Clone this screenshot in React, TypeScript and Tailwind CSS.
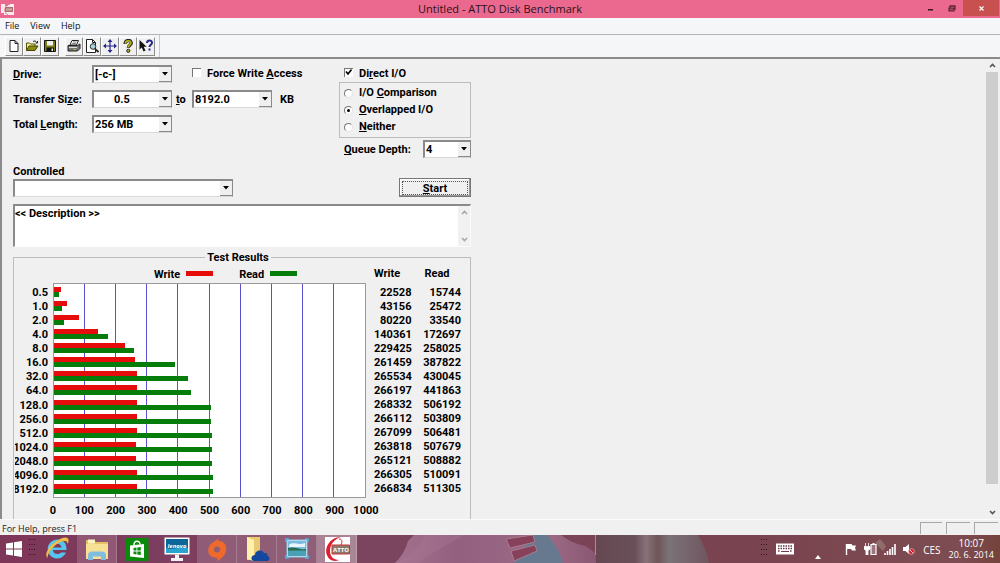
import type { ReactNode } from 'react';
import clsx from 'clsx';

interface Result {
  size: string;
  write: number;
  read: number;
}

const RESULTS: Result[] = [
  { size: '0.5', write: 22528, read: 15744 },
  { size: '1.0', write: 43156, read: 25472 },
  { size: '2.0', write: 80220, read: 33540 },
  { size: '4.0', write: 140361, read: 172697 },
  { size: '8.0', write: 229425, read: 258025 },
  { size: '16.0', write: 261459, read: 387822 },
  { size: '32.0', write: 265534, read: 430045 },
  { size: '64.0', write: 266197, read: 441863 },
  { size: '128.0', write: 268332, read: 506192 },
  { size: '256.0', write: 266112, read: 503809 },
  { size: '512.0', write: 267099, read: 506481 },
  { size: '1024.0', write: 263818, read: 507679 },
  { size: '2048.0', write: 265121, read: 508882 },
  { size: '4096.0', write: 266305, read: 510091 },
  { size: '8192.0', write: 266834, read: 511305 },
];

// Full width of the chart, in KB/s
const SCALE = 1000000;
const TICKS = [0, 100, 200, 300, 400, 500, 600, 700, 800, 900, 1000];

export default function App() {
  return (
    <div className="flex h-screen flex-col overflow-hidden bg-[#f0f0f0] font-['Roboto',sans-serif] text-[11px] font-bold text-black">
      <TitleBar />
      <nav className="flex h-4 shrink-0 items-center gap-[11px] bg-[#f5f6f8] px-[5px] font-['Open_Sans',sans-serif] text-[9px] font-normal text-[#111]">
        <button>File</button>
        <button>View</button>
        <button>Help</button>
      </nav>
      <Toolbar />
      <main className="flex min-h-0 flex-1 overflow-hidden border-t-2 border-l-2 border-[#8b8b8b] pr-[2px]">
        <div className="min-w-0 flex-1 overflow-hidden pt-[6px] pl-[11px]">
          <div className="w-full max-w-[458px]">
            <Settings />
            <Description />
            <TestResults />
          </div>
        </div>
        <PageScrollbar />
      </main>
      <footer className="flex h-[16px] shrink-0 items-center justify-between border-t border-[#fbfbfb] font-['Open_Sans',sans-serif] text-[9px] font-normal text-[#222]">
        <span className="pt-[2px] pl-[2px] leading-[13px]">For Help, press F1</span>
        <div className="flex gap-1 pr-[2px]">
          <span className="h-3 w-[22px] border-t border-l border-[#a8a8a8]" />
          <span className="h-3 w-[24px] border-t border-l border-[#a8a8a8]" />
          <span className="h-3 w-[24px] border-t border-l border-[#a8a8a8]" />
        </div>
      </footer>
      <Taskbar />
    </div>
  );
}

function TitleBar() {
  return (
    <header className="grid h-[18px] shrink-0 grid-cols-[1fr_auto_1fr] items-center bg-[#eb698e] font-['Open_Sans',sans-serif] text-[11px] font-normal text-[#2b1219]">
      <svg className="ml-[1px] h-[13px] w-[13px]" viewBox="0 0 13 13" aria-hidden="true">
        <path d="M0 1h4v2h3V1h6v11H3v-2H0z" fill="#fbe9ee" />
        <path d="M9 1C3 2 2 10 7 12" fill="none" stroke="#e0788f" />
        <path d="M4 4h8v5H4z" fill="#a9706e" />
        <path d="M5 6h6M5 7h6" stroke="#dcc5b8" strokeWidth=".8" />
      </svg>
      <h1 className="leading-[18px]">Untitled - ATTO Disk Benchmark</h1>
      <div className="flex h-full items-start justify-end pr-[1px]">
        <button aria-label="Minimize" className="flex h-4 w-5 items-center justify-center">
          <svg width="6" height="6"><path d="M0 4h5v1.5H0z" fill="#3b1520" /></svg>
        </button>
        <button aria-label="Restore" className="flex h-4 w-[22px] items-center justify-center">
          <svg width="8" height="7" viewBox="0 0 8 7">
            <path d="M2 1h5v3H2z" fill="none" stroke="#5b2435" strokeWidth="1.3" />
            <path d="M1 3h5v3H1z" fill="#a84863" stroke="#5b2435" strokeWidth="1.2" />
          </svg>
        </button>
        <button aria-label="Close" className="flex h-4 w-9 items-center justify-center bg-[#c8504f]">
          <svg width="5" height="5"><path d="M.5.5l4 4M4.500.5l-4 4" stroke="#fff" strokeWidth="1.100" /></svg>
        </button>
      </div>
    </header>
  );
}

function ToolButton({ label, children }: { label: string; children: ReactNode }) {
  return (
    <button
      aria-label={label}
      className="flex h-[19px] w-[18px] items-center justify-center border border-t-white border-r-[#8c8c8c] border-b-[#8c8c8c] border-l-white bg-[#f0f0f0]"
    >
      <svg width="14" height="14" viewBox="0 0 14 14" aria-hidden="true">
        {children}
      </svg>
    </button>
  );
}

function Toolbar() {
  return (
    <div className="flex h-[23px] shrink-0 border-t border-[#b4b4b6] bg-[#f5f6f8]">
      <div className="flex items-center gap-[6px] border-r border-[#c9c9cb] pr-1 pl-[5px]">
        <div className="flex">
          <ToolButton label="New">
            <path d="M3 1.500h5l3 3v8H3z" fill="#fff" stroke="#222" />
            <path d="M8 1.500v3h3" fill="none" stroke="#222" />
          </ToolButton>
          <ToolButton label="Open">
            <path d="M1.500 11V4h3l1 1H10v2" fill="#f4ef8c" stroke="#55550a" />
            <path d="M1.500 11.500l2.500-4.500h9l-3 4.500z" fill="#8b8b10" stroke="#44440a" />
            <path d="M8 2.500c1.500-1 3-.5 3.500 1M12.500 2v2h-2" fill="none" stroke="#222" />
          </ToolButton>
          <ToolButton label="Save">
            <path d="M1.500 1.500h11v11h-11z" fill="#7c7c12" stroke="#111" />
            <path d="M4 2h6v4.500H4z" fill="#f0f0f0" />
            <path d="M3.500 8.500h7.500V12H3.500z" fill="#111" />
            <path d="M8.500 9.500H10V12H8.500z" fill="#eee" />
          </ToolButton>
        </div>
        <div className="flex">
          <ToolButton label="Print">
            <path d="M5 1.500h6.500l-2 4.500H3z" fill="#fff" stroke="#222" />
            <path d="M6 3h3.500M5.200 4.500h3.500" stroke="#444" strokeWidth=".7" />
            <path d="M1 6.500h9.500L13 5v4.500L10.500 12H1z" fill="#777" stroke="#222" />
            <path d="M2 8.500h8" stroke="#ddd" />
            <path d="M6.500 10.500h2" stroke="#c9c22c" />
          </ToolButton>
          <ToolButton label="Print Preview">
            <path d="M1.500.5h6l3 3v10h-9z" fill="#fff" stroke="#222" />
            <path d="M7.500.5v3h3" fill="none" stroke="#222" />
            <circle cx="8" cy="7.500" r="2.800" fill="#a8d4dd" stroke="#333" />
            <path d="M10 9.800l3.500 3.200" stroke="#222" strokeWidth="1.800" />
          </ToolButton>
          <ToolButton label="Move">
            <path d="M7 2v10M2 7h10" stroke="#26268c" strokeWidth="1.200" />
            <path d="M7 0l2.500 3h-5zM7 14l2.500-3h-5zM0 7l3-2.500v5zM14 7l-3-2.500v5z" fill="#26268c" />
          </ToolButton>
          <ToolButton label="Help">
            <path d="M4.200 5c0-4.500 6-4.500 6-1 0 2-2.800 2-2.800 4.800" fill="none" stroke="#222" strokeWidth="3.400" />
            <path d="M4.500 4.700c0-3.700 5.300-3.700 5.300-.7 0 1.800-2.500 2-2.500 4.300" fill="none" stroke="#b5b01c" strokeWidth="1.900" />
            <circle cx="7.300" cy="11.800" r="1.600" fill="#b5b01c" stroke="#222" />
          </ToolButton>
          <ToolButton label="Context Help">
            <path d="M.5 1v9.500l2.300-2 1.700 4 2-.9-1.800-3.800h3z" fill="#111" />
            <path d="M8 4c0-3.200 5-3.200 5-.3 0 2-2.500 2-2.500 4.300M10.500 9.500v2" fill="none" stroke="#26268c" strokeWidth="2" />
          </ToolButton>
        </div>
      </div>
    </div>
  );
}

interface ComboBoxProps {
  id: string;
  value: string;
  label?: string;
  className: string;
  indent?: boolean;
}

function ComboBox({ id, value, label, className, indent = false }: ComboBoxProps) {
  return (
    <div
      className={clsx(
        'relative h-[18px] border-t-2 border-r border-b border-l-2 border-t-[#8a8a8a] border-r-[#8a8a8a] border-b-[#d8d8d8] border-l-[#8a8a8a] bg-white',
        className,
      )}
    >
      <select
        id={id}
        aria-label={label}
        className={clsx('block h-full w-full appearance-none bg-transparent pr-3 leading-[15px] outline-none', indent ? 'pl-5' : 'pl-[1px]')}
      >
        <option>{value}</option>
      </select>
      <span className="pointer-events-none absolute inset-y-0 right-0 flex w-3 items-center justify-center border-b border-[#8a8a8a] bg-[#f0f0f0]">
        <svg width="6" height="4"><path d="M0 0h6L3 3.500z" fill="#000" /></svg>
      </span>
    </div>
  );
}

const CHECKBOX =
  "relative block h-[9px] w-[9px] shrink-0 appearance-none border-t border-l border-[#777] bg-white";
const RADIO =
  'grid h-[9px] w-[9px] shrink-0 appearance-none place-items-center rounded-full border border-t-[#777] border-r-[#e4e4e4] border-b-[#e4e4e4] border-l-[#777] bg-white checked:before:h-[3px] checked:before:w-[3px] checked:before:rounded-full checked:before:bg-black';
const CAPTION = 'pt-[2px] leading-[16px]';

function Settings() {
  return (
    <section aria-label="Settings">
      <div className="flex justify-between">
        <div className="flex flex-col gap-[7px]">
          <div className="flex h-[18px]">
            <label htmlFor="drive" className={clsx('w-[79px]', CAPTION)}><u>D</u>rive:</label>
            <ComboBox id="drive" value="[-c-]" className="w-20" />
            <label className="ml-5 flex h-[15px] items-center gap-[6px]">
              <input type="checkbox" className={CHECKBOX} />
              <span className={CAPTION}>Force Write <u>A</u>ccess</span>
            </label>
          </div>
          <div className="flex items-center">
            <label htmlFor="size-from" className={clsx('w-[79px]', CAPTION)}>Transfer Si<u>z</u>e:</label>
            <ComboBox id="size-from" value="0.5" className="w-20" indent />
            <label htmlFor="size-to" className={clsx('w-5 pl-1', CAPTION)}><u>t</u>o</label>
            <ComboBox id="size-to" value="8192.0" className="w-20" />
            <span className={clsx('pl-2', CAPTION)}>KB</span>
          </div>
          <div className="flex items-center">
            <label htmlFor="length" className={clsx('w-[79px]', CAPTION)}>Total <u>L</u>ength:</label>
            <ComboBox id="length" value="256 MB" className="w-20" />
          </div>
        </div>

        <div className="flex w-[132px] flex-col gap-[2px]">
          <label className="flex h-[15px] items-center gap-[6px] pl-[5px]">
            <span className="relative">
              <input type="checkbox" defaultChecked className={CHECKBOX} />
              <svg className="pointer-events-none absolute top-[1px] left-[1px]" width="7" height="7">
                <path d="M1 2.500l2 2.500 3.500-4.500" fill="none" stroke="#000" strokeWidth="1.600" />
              </svg>
            </span>
            <span className={CAPTION}>Di<u>r</u>ect I/O</span>
          </label>
          <fieldset aria-label="I/O mode" className="h-14 border border-[#bcbcbc] pt-[2px] pl-1">
            <label className="flex h-[17px] items-center gap-[6px]">
              <input type="radio" name="io" className={RADIO} />
              <span>I/O <u>C</u>omparison</span>
            </label>
            <label className="flex h-[17px] items-center gap-[6px]">
              <input type="radio" name="io" defaultChecked className={RADIO} />
              <span><u>O</u>verlapped I/O</span>
            </label>
            <label className="flex h-[17px] items-center gap-[6px]">
              <input type="radio" name="io" className={RADIO} />
              <span><u>N</u>either</span>
            </label>
          </fieldset>
          <div className="flex items-center justify-between pl-[5px]">
            <label htmlFor="queue" className={CAPTION}><u>Q</u>ueue Depth:</label>
            <ComboBox id="queue" value="4" className="w-12" />
          </div>
        </div>
      </div>

      <div className="mt-[6px] flex items-end justify-between">
        <div>
          <label htmlFor="controlled" className="block h-[15px] leading-[15px]">Controlled</label>
          <ComboBox id="controlled" value="" className="w-[220px]" />
        </div>
        <button className="h-[19px] w-[72px] border border-[#777] bg-[#f0f0f0] shadow-[inset_-1px_-1px_0_#999,inset_1px_1px_0_#fff]">
          <span className="mx-[2px] block h-[14px] border border-dotted border-[#555] leading-[14px]"><u>S</u>tart</span>
        </button>
      </div>
    </section>
  );
}

function Description() {
  return (
    <div className="mt-[7px] flex h-[43px] border-t-2 border-r border-b border-l-2 border-t-[#8a8a8a] border-r-[#fbfbfb] border-b-[#fbfbfb] border-l-[#8a8a8a] bg-white">
      <textarea
        aria-label="Description"
        defaultValue="<< Description >>"
        className="block h-full flex-1 resize-none overflow-hidden bg-transparent leading-[16px] outline-none"
      />
      <div className="flex w-3 flex-col items-center justify-between bg-[#f1f1f1] py-1">
        <Chevron up color="#a8a8a8" />
        <Chevron color="#a8a8a8" />
      </div>
    </div>
  );
}

function Chevron({ up = false, color }: { up?: boolean; color: string }) {
  return (
    <svg width="7" height="5" aria-hidden="true">
      <path d={up ? 'M1 4l2.500-2.500L6 4' : 'M1 1l2.500 2.500L6 1'} fill="none" stroke={color} strokeWidth="1.600" />
    </svg>
  );
}

function TestResults() {
  return (
    <fieldset className="mt-[3px] h-[280px] border border-[#bcbcbc] pr-[9px] pl-[1px]">
      <legend className="mx-auto h-[14px] px-[2px] leading-[16px]">Test Results</legend>
      <div className="flex gap-2">
        <div className="grid min-w-0 flex-1 grid-cols-[33px_1fr] grid-rows-[19px_215px_24px] gap-x-[5px]">
          <div className="col-start-2 flex items-center gap-[6px] pl-[101px]">
            <span className={CAPTION}>Write</span>
            <span className="h-[5px] w-[27px] bg-[#e60c0c]" />
            <span className={clsx('ml-5', CAPTION)}>Read</span>
            <span className="h-[5px] w-[27px] bg-[#067c0a]" />
          </div>

          <div className="col-start-1 flex flex-col overflow-hidden pt-[3px] pb-[1px]">
            {RESULTS.map((r) => (
              <span key={r.size} className="flex min-h-0 flex-1 items-center justify-end leading-[14px]">{r.size}</span>
            ))}
          </div>
          <div className="relative border border-[#999] bg-white pt-[1px] pb-[1px]">
            <div className="absolute inset-0 grid grid-cols-10">
              {TICKS.slice(1).map((t) => (
                <span key={t} className="border-r border-[#5a52cc] last:border-r-0" />
              ))}
            </div>
            <div className="relative flex h-full flex-col">
              {RESULTS.map((r) => (
                <div key={r.size} className="flex flex-1 flex-col justify-center">
                  <div className="h-[5px] bg-[#e60c0c]" style={{ width: `${(r.write / SCALE) * 100}%` }} />
                  <div className="h-[5px] bg-[#067c0a]" style={{ width: `${(r.read / SCALE) * 100}%` }} />
                </div>
              ))}
            </div>
          </div>

          <div className="col-start-2 flex justify-between leading-[26px]">
            {TICKS.map((t) => (
              <span key={t} className="flex w-0 justify-center">{t}</span>
            ))}
          </div>
        </div>

        <table className="h-fit w-[87px] table-fixed border-collapse">
          <thead>
            <tr className="h-[22px] text-left align-top leading-[20px]">
              <th>Write</th>
              <th className="pl-[7px]">Read</th>
            </tr>
          </thead>
          <tbody>
            {RESULTS.map((r) => (
              <tr key={r.size} className="text-right leading-[14px]">
                <td className="pr-[6px]">{r.write}</td>
                <td>{r.read}</td>
              </tr>
            ))}
          </tbody>
        </table>
      </div>
    </fieldset>
  );
}

function PageScrollbar() {
  return (
    <div className="flex w-3 flex-col items-center bg-[#f0f0f0]">
      <span className="flex h-[13px] items-center"><Chevron up color="#555" /></span>
      <div className="w-full flex-1">
        <div className="h-[95%] bg-[#cdcdcd]" />
      </div>
      <span className="flex h-[13px] items-center"><Chevron color="#555" /></span>
    </div>
  );
}

function Taskbar() {
  return (
    <div className="relative h-7 shrink-0 overflow-hidden bg-[#7c4358] font-['Open_Sans',sans-serif] text-[10px] font-normal text-white">
      <Wallpaper />
      <div className="relative flex h-full items-center justify-between">
        <div className="flex h-full items-center">
          <button aria-label="Start" className="flex h-full w-[27px] items-center justify-center">
            <svg width="18" height="18" viewBox="0 0 18 18">
              <path d="M1 3.500l7-1v6H1zM9 2.300L17 1v7.500H9zM1 9.500h7v6l-7-1zM9 9.500h8V17l-8-1.300z" fill="#fff" />
            </svg>
          </button>
          <Grip />
          <Task label="Internet Explorer">
            <path d="M13 3.500a9.500 9.500 0 1 0 9 13h-5c-3 3-8 1.500-8-2.500h13.500C23 7 19 3.500 13 3.500zM9 11.500c.5-5 8-5 8.500 0z" fill="#55c4f2" />
            <path d="M3.500 22c-4-4 2-13 10-17.500C19 1 25 0 24.500 5c0 1.500-.5 2-1 3 0-3-2-4-7-2C9 9.500 3.500 17 3.500 22z" fill="#f0bd45" />
          </Task>
          <Task label="File Explorer" open>
            <path d="M2 4h8l1.500 2H24v17H2z" fill="#e3c167" />
            <path d="M4 3.500h7v4H4z" fill="#fff4c0" />
            <path d="M2 8h22v15H2z" fill="#f6e195" />
            <path d="M4 24v-5c0-2 2-3.500 4-3.500h10c2 0 4 1.500 4 3.500v5h-5v-3.500H9V24z" fill="#7fbfdd" />
          </Task>
          <Task label="Store">
            <path d="M1.500 2h23v23h-23z" fill="#0a8a0a" />
            <path d="M6 9.500l14-1.500v14L6 20.500z" fill="#fff" />
            <path d="M10 9c0-5 6-5 6-.5" fill="none" stroke="#fff" strokeWidth="1.400" />
            <path d="M9.500 12l3-.4v3h-3zM13.300 11.500l3.500-.4v3.500h-3.500zM9.500 15.500h3v3l-3-.4zM13.300 15.500h3.500V19l-3.500-.4z" fill="#0a8a0a" />
          </Task>
          <Task label="Lenovo">
            <path d="M.5 1.500h25v17H.5z" fill="#fff" />
            <path d="M2 3h22v14H2z" fill="#0b6699" />
            <path d="M2 12c8 3 15-3 22 0v5H2z" fill="#29a3cf" />
            <text x="13" y="12" textAnchor="middle" fill="#fff" fontSize="6" fontStyle="italic" fontWeight="700">lenovo</text>
            <path d="M11 18.500h4V22h4v3H7v-3h4z" fill="#f2f2f2" />
          </Task>
          <Task label="Origin" open>
            <path d="M15 2c-1 1-1 2-.5 3 6 0 9 5 7.500 10-1 5-5 7.500-8 10-.5-.3-1-1-.5-3C7 22 3 18 4.500 12 6 7 11 5.500 15 2zm-2 8.500a3 3 0 1 0 .1 6 3 3 0 0 0-.1-6z" fill="#ee6a2c" fillRule="evenodd" />
          </Task>
          <Task label="OneDrive" open>
            <path d="M3 1h13v23H3z" fill="#e9c971" />
            <path d="M3 1l7 3v21l-7-2z" fill="#fff0ad" />
            <path d="M10 25c-4-1-3-6 1-6 0-5 7-6 9-2 3-.5 4 1.500 3.500 3 3 1 2.500 4.500 0 5z" fill="#13489e" />
          </Task>
          <Task label="Photos" open>
            <path d="M3 4h20v17H3z" fill="#d6ebf5" stroke="#8fc3dd" />
            <path d="M4 5h18v8H4z" fill="#79bbe3" />
            <path d="M5 9c5-4 8 1 16-2v4H5z" fill="#eaf5fa" />
            <path d="M4 12c7-2 11 2 18 1v2H4z" fill="#2c6a4c" />
            <path d="M4 14.500h18V20H4z" fill="#4aa1b5" />
            <path d="M2 6V3h3M21 3h3v3M24 19v3h-3M5 22H2v-3" fill="none" stroke="#58b2e8" strokeWidth="1.500" />
          </Task>
          <Task label="ATTO Disk Benchmark" open active>
            <path d="M1 1h25v25H1z" fill="#fff" />
            <path d="M17 1C6 1 0 12 3 19c2 6 8 7 12 5-6 0-9-4-9-9C6 9 10 3 17 1z" fill="#df1f2d" />
            <path d="M15 3c4 0 3 4 2 6" fill="none" stroke="#df1f2d" />
            <path d="M8 9h17.500v9H8z" fill="#8b7b6d" stroke="#c33" />
            <text x="17" y="16" textAnchor="middle" fill="#fff" fontSize="6" fontWeight="700">ATTO</text>
          </Task>
        </div>
        <Tray />
      </div>
    </div>
  );
}

function Task({ label, open = false, active = false, children }: { label: string; open?: boolean; active?: boolean; children: ReactNode }) {
  return (
    <button
      aria-label={label}
      className={clsx(
        'flex h-full w-10 items-center justify-center',
        open && 'border-r border-white/20',
        open && (active ? 'bg-white/35' : 'bg-white/15'),
      )}
    >
      <svg width="26" height="26" viewBox="0 0 26 26" aria-hidden="true">{children}</svg>
    </button>
  );
}

function Grip() {
  return (
    <svg width="10" height="22" aria-hidden="true">
      <path d="M2.500 1v20M5 1v20M7.500 1v20" stroke="#2e1420" strokeDasharray="1 4" />
    </svg>
  );
}

function Tray() {
  return (
    <div className="flex h-full items-center pr-[6px]">
      <Grip />
      <button aria-label="Touch keyboard" className="mr-5 ml-[6px]">
        <svg width="20" height="12">
          <path d="M1 .5h18v11H1z" fill="#fff" />
          <path d="M3 3h14M3 5.500h14M3 8h2M15 8h2" stroke="#6b3a48" strokeDasharray="1.500 1" strokeWidth="1.300" />
          <path d="M6 8.500h8" stroke="#6b3a48" />
        </svg>
      </button>
      <button aria-label="Show hidden icons" className="mr-6 self-end pb-1">
        <svg width="6" height="4"><path d="M0 4l3-4 3 4z" fill="#fff" /></svg>
      </button>
      <div className="flex items-center gap-[7px]">
        <svg width="12" height="12">
          <path d="M1.500 1v11" stroke="#fff" strokeWidth="1.400" />
          <path d="M2 1h4.500l1 1.500H11L10 5l1 2.500H7L6 6H2z" fill="#fff" />
        </svg>
        <svg width="13" height="12">
          <path d="M1.500 0v3M4.500 0v3M0 3.500h6V6L4 7.500V12H2V7.500L0 6z" fill="#fff" stroke="#fff" strokeWidth=".8" />
          <path d="M7 1.500h5v10H7z" fill="#9d7580" stroke="#fff" strokeWidth="1.200" />
          <path d="M8.500 0h2v1h-2z" fill="#fff" />
        </svg>
        <svg width="12" height="11">
          <path d="M1 9v2M3.500 7v4M6 5v6M8.500 3v8M11 0v11" stroke="#fff" strokeWidth="1.600" />
        </svg>
        <svg width="12" height="12">
          <path d="M0 4h2.500L6 1v10L2.500 8H0z" fill="#fff" />
          <circle cx="8.500" cy="8.500" r="2.900" fill="#d02030" stroke="#f3c9cd" strokeWidth=".6" />
          <path d="M7 7l3 3" stroke="#fff" strokeWidth=".8" />
        </svg>
      </div>
      <span className="mx-2 pt-[2px]">CES</span>
      <div className="text-center leading-[12px]">
        <div>10:07</div>
        <div className="text-[9px]">20. 6. 2014</div>
      </div>
    </div>
  );
}

/* The strip of desktop picture that shines through the taskbar */
function Wallpaper() {
  return (
    <svg className="absolute inset-0 h-full w-full" viewBox="0 0 1000 28" preserveAspectRatio="none" aria-hidden="true">
      <defs>
        <linearGradient id="base">
          <stop offset="0" stopColor="#7e3658" />
          <stop offset=".2" stopColor="#7d3f60" />
          <stop offset=".38" stopColor="#7c455f" />
          <stop offset=".75" stopColor="#79434f" />
          <stop offset=".96" stopColor="#7d4c52" />
          <stop offset="1" stopColor="#75433c" />
        </linearGradient>
        <linearGradient id="skin">
          <stop offset="0" stopColor="#a3708c" />
          <stop offset=".3" stopColor="#936080" />
          <stop offset=".75" stopColor="#9c6985" />
          <stop offset="1" stopColor="#885570" />
        </linearGradient>
        <linearGradient id="cloth">
          <stop offset="0" stopColor="#654752" />
          <stop offset=".35" stopColor="#695059" />
          <stop offset=".45" stopColor="#89727a" />
          <stop offset=".55" stopColor="#6e5558" />
          <stop offset=".65" stopColor="#7a7378" />
          <stop offset="1" stopColor="#70545f" />
        </linearGradient>
      </defs>
      <path d="M0 0h1000v28H0z" fill="url(#base)" />
      <path d="M395 28q10-10 13-22l6-6h147q10 8 24 11 12 6 17 17z" fill="url(#skin)" />
      <path d="M418 28q25-17 47-28h-40q-10 20-30 28z" fill="#a87793" opacity=".4" />
      <path d="M532 0h15q12 12 16 28h-49z" fill="#66798e" />
      <path d="M506 4l27-4 2 7-25 6zM511 16l24-6 2 6-23 10z" fill="#87415a" stroke="#b08595" strokeWidth=".8" />
      <path d="M595 0h103q9 15 11 28H596z" fill="url(#cloth)" />
      <path d="M595.500 0v20" stroke="#b08794" />
      <path d="M875 8l5-4 6 7-3 5z" fill="#b1a48e" opacity=".4" />
    </svg>
  );
}
